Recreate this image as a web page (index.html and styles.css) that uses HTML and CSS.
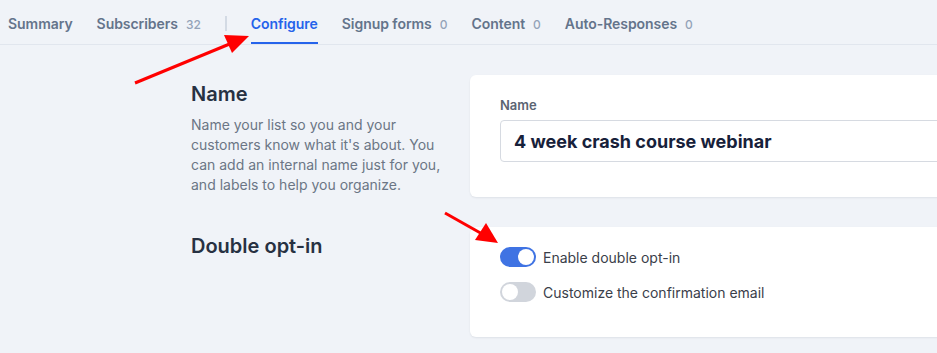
FILE: index.html
```html
<!DOCTYPE html>
<html lang="en">
<head>
    <meta charset="UTF-8">
    <title>Configure list</title>
    <link rel="stylesheet" href="styles.css">
</head>
<body>

<nav class="tabs">
    <a class="tab">Summary</a>
    <a class="tab">Subscribers <span class="count">32</span></a>
    <span class="divider"></span>
    <a class="tab active">Configure</a>
    <a class="tab">Signup forms <span class="count">0</span></a>
    <a class="tab">Content <span class="count">0</span></a>
    <a class="tab">Auto-Responses <span class="count">0</span></a>
</nav>

<main class="settings">
    <section class="setting">
        <div class="setting-info">
            <h2>Name</h2>
            <p>Name your list so you and your customers know what it's about. You can add an internal name just for you, and labels to help you organize.</p>
        </div>
        <div class="card card-name">
            <label for="listName">Name</label>
            <input type="text" id="listName" value="4 week crash course webinar">
        </div>
    </section>

    <section class="setting">
        <div class="setting-info">
            <h2>Double opt-in</h2>
        </div>
        <div class="card card-toggles">
            <div class="toggle-row">
                <span class="toggle on"></span>
                <span>Enable double opt-in</span>
            </div>
            <div class="toggle-row">
                <span class="toggle"></span>
                <span>Customize the confirmation email</span>
            </div>
        </div>
    </section>
</main>

<!-- annotation arrows -->
<svg class="arrows" width="937" height="353" viewBox="0 0 937 353">
    <line x1="135" y1="83" x2="232" y2="43" stroke="#ff0000" stroke-width="3"/>
    <polygon points="249,36 224,35 232,53" fill="#ff0000"/>
    <line x1="445" y1="213" x2="484" y2="235" stroke="#ff0000" stroke-width="3"/>
    <polygon points="498,243 475,240 486,223" fill="#ff0000"/>
</svg>

</body>
</html>
```

FILE: styles.css
```css
body {
    margin: 0;
    background-color: #f0f3f8;
    font-family: Inter, "Noto Sans", sans-serif;
    overflow: hidden;
    width: 937px;
    height: 353px;
    position: relative;
}
.tabs {
    display: flex;
    align-items: center;
    gap: 24px;
    padding-left: 8px;
    height: 44px;
    border-bottom: 1px solid #e1e6ee;
}
.tab {
    display: flex;
    align-items: center;
    gap: 8px;
    height: 44px;
    box-sizing: border-box;
    padding-top: 3px;
    font-size: 14px;
    font-weight: 600;
    letter-spacing: -0.05px;
    color: #64748b;
}
.tab.active {
    color: #2563eb;
    box-shadow: inset 0 -2px 0 #2563eb;
}
.count {
    font-size: 12px;
    font-weight: 500;
    color: #94a3b8;
    padding-top: 2px;
}
.divider {
    width: 2px;
    height: 15px;
    margin-top: 3px;
    background-color: #d3dae4;
}
.settings {
    padding: 30px 0 0 191px;
}
.setting {
    display: grid;
    grid-template-columns: 279px 600px;
    margin-bottom: 30px;
}
.setting-info {
    padding-top: 5px;
}
.setting-info h2 {
    margin: 0 0 7px;
    font-size: 20px;
    line-height: 28px;
    font-weight: 600;
    color: #273142;
}
.setting-info p {
    margin: 0;
    width: 258px;
    font-size: 14px;
    line-height: 20px;
    color: #6b7685;
}
.card {
    background-color: white;
    border-radius: 6px;
    box-shadow: 0 1px 2px rgba(15, 23, 42, 0.08);
    padding: 20px 30px 35px;
}
.card label {
    display: block;
    font-size: 13px;
    line-height: 20px;
    font-weight: 600;
    color: #5b6472;
    margin-bottom: 5px;
}
.card input {
    width: 100%;
    height: 42px;
    box-sizing: border-box;
    padding: 0 13px;
    border: 1px solid #d6dae1;
    border-radius: 4px;
    font-family: Inter, "Noto Sans", sans-serif;
    font-size: 18px;
    font-weight: 700;
    color: #17213a;
}
.toggle-row {
    display: flex;
    align-items: center;
    gap: 7px;
    font-size: 14px;
    color: #3a404a;
    margin-bottom: 15px;
}
.toggle-row:last-child {
    margin-bottom: 0;
}
.toggle {
    width: 36px;
    height: 20px;
    border-radius: 10px;
    background-color: #d1d5dc;
    position: relative;
}
.toggle::after {
    content: "";
    position: absolute;
    top: 2px;
    left: 2px;
    width: 16px;
    height: 16px;
    border-radius: 50%;
    background-color: white;
}
.toggle.on {
    background-color: #3f73e3;
}
.toggle.on::after {
    left: 18px;
}
.arrows {
    position: absolute;
    top: 0;
    left: 0;
    pointer-events: none;
}
```
